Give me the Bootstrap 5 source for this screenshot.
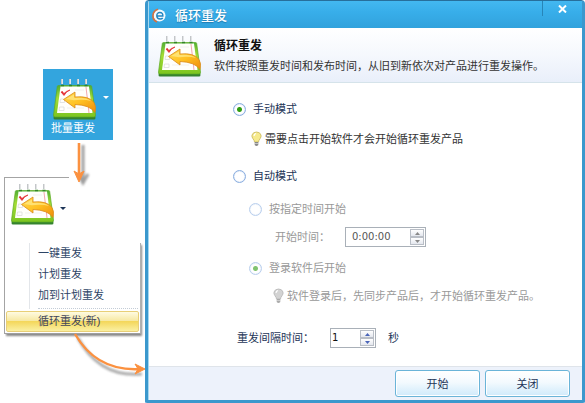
<!DOCTYPE html>
<html lang="zh-CN">
<head>
<meta charset="utf-8">
<meta name="viewport" content="width=device-width, initial-scale=1">
<title>循环重发</title>
<link href="https://cdn.jsdelivr.net/npm/bootstrap@5.3.0/dist/css/bootstrap.min.css" rel="stylesheet">
<style>
  body { font: 11px/16px "Liberation Sans", "Noto Sans CJK SC", sans-serif; color: #333; background: #fff; }
  button, input { font: inherit; }
  .side { width: 145px; padding: 69px 4px 0; }
  .tile { width: 70px; height: 71px; margin-left: 39px; background: #33a5de; color: #fff; padding-top: 9px; }
  .caret { border: 3px solid transparent; border-top-color: currentColor; border-bottom: 0; }
  .tile .caret { margin: -4px 0 0 6px; }
  .tile-icon { padding-left: 10px; }
  .cal { width: 44px; height: 42px; flex: none; }
  .down-arrow { left: 70px; top: 140px; pointer-events: none; }
  .curve-arrow { left: 68px; top: 328px; pointer-events: none; }
  .drop { margin-top: 37px; border-left: 1px solid #a4a4a4; }
  .drop-head { width: 64px; height: 66px; border-top: 1px solid #a4a4a4; padding: 5px 0 0 6px; }
  .drop-head .caret { margin: 7px 0 0 5px; color: #1d3557; }
  .drop-menu { border-right: 1px solid #b0b0b0; border-bottom: 1px solid #a0a0a0; box-shadow: 1px 2px 2px #888; clip-path: inset(0 -3px -5px 0); }
  .drop-menu ul { margin-left: 24px; padding: 0 0 3px 8px; border-left: 1px solid #e3e6ea; }
  .menu-item { display: block; border: 0; background: none; padding: 2px 0; line-height: 17px; color: #2d4465; text-align: left; }
  .split { border-top: 1px dotted #c3ccd6; margin: -1px 2px 2px 33px; }
  .menu-item.chosen { margin: 0 1px 1px; width: calc(100% - 2px); padding: 1px 0 1px 31px; border: 1px solid #e8cf77; border-radius: 2px; color: #41455a; background: linear-gradient(#fffbe2, #f7e9a4 45%, #f4d75b 50%, #faf0a3); }

  .dialog { min-width: 0; border: 3px solid #3b98cd; border-top: 1px solid #276f9c; border-radius: 4px 4px 2px 2px; padding-left: 1px; background: #fff; box-shadow: inset 1px 0 #a5d8f1; }
  .title { height: 27px; background: linear-gradient(#43b8f1, #38aeea 40%, #31a2dc); color: #fff; padding: 2px 0 0 2px; gap: 8px; }
  .title h1 { font-size: 13px; line-height: 20px; font-weight: 500; text-shadow: 0 1px 1px #1f7bb0; }
  .close-btn { width: 40px; height: 15px; margin-top: -2px; border: 0; border-left: 1px solid #2785b8; background: none; color: #fff; }
  .intro { height: 55px; padding: 2px 8px 0 9px; background: linear-gradient(#fff, #f5f8fd 50%, #e9effa); border-bottom: 1px solid #d5e3ea; }
  .intro h2 { font-size: 12px; line-height: 20px; font-weight: 700; color: #111; }
  .intro p { line-height: 20px; color: #333; }
  .form-body { padding: 11px 8px 0 84px; color: #1d3557; }
  .h-22 { height: 22px; } .h-28 { height: 28px; } .h-30 { height: 30px; } .h-34 { height: 34px; } .h-44 { height: 44px; } .h-56 { height: 56px; }
  .lv-tip { padding-left: 18px; } .lv-sub { padding-left: 16px; } .lv-field { padding-left: 42px; } .lv-note { padding-left: 40px; } .lv-gap { padding-left: 4px; }
  .pick { appearance: none; width: 13px; height: 13px; margin: 0 7px 0 0; border: 1px solid #8aaee0; border-radius: 50%; background: #fff; box-shadow: inset 0 0 1px #8aaee0; flex: none; }
  .pick:checked { background: radial-gradient(circle, #2f9d12 0 2px, #fff 3px); }
  .pick:disabled { opacity: .6; }
  .tip-text { color: #333; }
  .muted { color: #999; }
  .bulb { width: 11px; height: 16px; margin-right: 3px; flex: none; }
  .field-label { width: 70px; } .gap-label { width: 93px; }
  .spin { height: 20px; border: 1px solid #a9b0b8; background: #fff; padding: 1px; }
  .spin input { border: 0; padding: 0; background: none; min-width: 0; font-family: "DejaVu Sans", sans-serif; font-size: 10px; line-height: 14px; }
  .spin-time { width: 81px; } .spin-time input { padding-left: 5px; color: #555; }
  .spin-sec { width: 46px; } .spin-sec input { color: #111; }
  .spin button { width: 14px; height: 8px; padding: 0; border: 1px solid #b9bec6; background: linear-gradient(#fff, #e4e7ee); color: #4964b8; line-height: 0; }
  .spin button:disabled { color: #888; }
  .foot { height: 34px; padding: 0 12px 0 8px; gap: 5px; background: #edf2fb; border-top: 1px solid #dfe4ea; }
  .act { width: 85px; height: 27px; padding: 0; border: 1px solid #6ab4d8; border-radius: 3px; background: linear-gradient(#fff, #f3fafe 45%, #cfeafb); box-shadow: inset 0 0 0 1px #fff; color: #1d3557; }
</style>
<script src="https://cdn.jsdelivr.net/npm/bootstrap@5.3.0/dist/js/bootstrap.bundle.min.js"></script>
</head>
<body>
<svg width="0" height="0" class="position-absolute" aria-hidden="true">
  <defs>
    <linearGradient id="gold" x1="0" y1="0" x2="1" y2="1"><stop offset="0" stop-color="#ffdc55"/><stop offset=".5" stop-color="#ffc021"/><stop offset="1" stop-color="#ee8b0b"/></linearGradient>
    <linearGradient id="leaf" x1="0" y1="0" x2="0" y2="1"><stop offset="0" stop-color="#4fae35"/><stop offset=".4" stop-color="#a4dc35"/><stop offset="1" stop-color="#7cc520"/></linearGradient>
    <filter id="soft" x="-50%" y="-50%" width="200%" height="200%"><feGaussianBlur stdDeviation="1.3"/></filter>
    <symbol id="calendar" viewBox="0 0 44 42">
      <path d="M1 37h41l.5 3q0 1.500-1.500 1.500H2Q.5 41.500.5 40z" fill="#35832e"/>
      <path d="M5.500 7.500h32q1 0 1.200 1L42.500 37q.2 2-1.500 2H2Q.2 39 .5 37L4.300 8.500q.2-1 1.200-1z" fill="url(#leaf)" stroke="#5cab22" stroke-width=".7"/>
      <path d="M7.500 8.500h28.500L39.500 35H4z" fill="#fffffb"/>
      <path d="M33 9l3 26" stroke="#f3a8ad" fill="none"/>
      <path d="M7.500 21h4v3.500h-4.500zM6.500 29h4.500v3.500H6z" fill="none" stroke="#ddd" stroke-width=".8"/>
      <path d="M14 30h17M22 12h9" stroke="#ebebeb" stroke-width=".7"/>
      <path d="M9 1v5M17 1v5M25 1v5M33 1v5" stroke="#c3c6c9" stroke-width="2"/>
      <path d="M9.500 1v5M17.500 1v5M25.500 1v5M33.500 1v5" stroke="#f1f1f1" stroke-width=".7"/>
      <path d="M8 7.500h3M16 7.500h3M24 7.500h3M31.500 7.500h3" stroke="#348329" stroke-width="1.500"/>
      <path d="M8 14l3 3.500q2-4 6-5.500-4 1-6 3.500-1-1-1.500-2z" fill="#e3292e" stroke="#e3292e" stroke-width=".7"/>
      <path d="M10.500 21.500L22 14v5Q36 17.500 41 24.500q2.500 4 1 10Q37 27 22 26.500V30z" fill="url(#gold)" stroke="#d98a18" stroke-width=".8" stroke-linejoin="round"/>
      <path d="M13 21l8-4.500v3.500q12-1 17 3-7-2-17-.8z" fill="#ffeb8c" opacity=".7"/>
    </symbol>
    <symbol id="lamp" viewBox="0 0 11 16">
      <path d="M3.500 11Q3.400 9.500 2 7.800.5 5.800 1 4q1-3 4.500-3T10 4q.5 1.800-1 3.800Q7.600 9.500 7.500 11z" fill="var(--glass)" stroke="var(--rim)" stroke-width=".8"/>
      <path d="M3 5q.2-2 2-2.500" stroke="#fff" stroke-width="1.200" fill="none"/>
      <path d="M3.700 11h3.600v3q-1.800 2-3.600 0z" fill="var(--base)"/><path d="M4 12.500h3" stroke="#ddd" stroke-width=".7"/>
    </symbol>
  </defs>
</svg>

<div class="d-flex position-relative">
  <aside class="side flex-shrink-0">
    <div class="tile">
      <div class="d-flex align-items-center tile-icon"><svg class="cal" aria-hidden="true"><use href="#calendar"/></svg><i class="caret"></i></div>
      <div class="ps-2">批量重发</div>
    </div>
    <div class="drop">
      <div class="drop-head d-flex">
        <svg class="cal" aria-hidden="true"><use href="#calendar"/></svg><i class="caret mt-4 pt-1"></i>
      </div>
      <div class="drop-menu">
        <ul class="list-unstyled mb-0">
          <li><button class="menu-item">一键重发</button></li>
          <li><button class="menu-item">计划重发</button></li>
          <li><button class="menu-item">加到计划重发</button></li>
        </ul>
        <div class="split"></div>
        <button class="menu-item chosen">循环重发(新)</button>
      </div>
    </div>
  </aside>

  <main class="dialog flex-grow-1 d-flex flex-column">
    <header class="title d-flex align-items-center">
      <svg width="16" height="16" viewBox="0 0 16 16" aria-hidden="true">
        <circle cx="8.500" cy="7.500" r="6" fill="#f3f9fd"/>
        <path d="M7 1.200A6.800 6.800 0 0 0 6 14" fill="none" stroke="#d9703d" stroke-width="1.600"/>
        <path d="M6 8h5.800Q12 4.500 8.900 4.500T5.800 8q.2 3 3.300 3 1.700 0 2.700-1" fill="none" stroke="#2487c2" stroke-width="1.500"/>
      </svg>
      <h1 class="mb-0">循环重发</h1>
      <button class="close-btn ms-auto align-self-start p-0 d-flex align-items-center justify-content-center" aria-label="关闭窗口">
        <svg width="9" height="8" viewBox="0 0 9 8"><path d="M1 .5l7 7M8 .5l-7 7" stroke="#fff" stroke-width="2"/></svg>
      </button>
    </header>
    <section class="intro d-flex align-items-center">
      <svg class="cal" aria-hidden="true"><use href="#calendar"/></svg>
      <div class="ms-2 ps-1"><h2 class="mb-0">循环重发</h2><p class="mb-0">软件按照重发时间和发布时间，从旧到新依次对产品进行重发操作。</p></div>
    </section>
    <form class="form-body flex-grow-1">
      <div class="h-30 d-flex align-items-center"><input class="pick" type="radio" name="mode" id="manual" checked><label for="manual">手动模式</label></div>
      <div class="h-30 d-flex align-items-center lv-tip tip-text"><svg class="bulb" style="--glass:#f6ea8e;--rim:#c8b65a;--base:#888" aria-hidden="true"><use href="#lamp"/></svg>需要点击开始软件才会开始循环重发产品</div>
      <div class="h-44 d-flex align-items-center"><input class="pick" type="radio" name="mode" id="auto"><label for="auto">自动模式</label></div>
      <div class="h-22 d-flex align-items-center lv-sub muted"><input class="pick" type="radio" name="when" id="fixed" disabled><label for="fixed">按指定时间开始</label></div>
      <div class="h-34 d-flex align-items-center lv-field muted">
        <label class="field-label" for="start">开始时间：</label>
        <div class="spin spin-time d-flex"><input class="flex-grow-1 w-100" id="start" type="text" value="0:00:00" disabled>
          <div class="d-flex flex-column"><button type="button" disabled aria-label="增加时间"><svg width="5" height="3"><path d="M0 3L2.500 0 5 3z" fill="currentColor"/></svg></button><button type="button" disabled aria-label="减少时间"><svg width="5" height="3"><path d="M0 0h5L2.500 3z" fill="currentColor"/></svg></button></div></div>
      </div>
      <div class="h-28 d-flex align-items-center lv-sub muted"><input class="pick" type="radio" name="when" id="login" checked disabled><label for="login">登录软件后开始</label></div>
      <div class="h-28 d-flex align-items-center lv-note muted"><svg class="bulb" style="--glass:#d3d3d3;--rim:#b5b5b5;--base:#aaa" aria-hidden="true"><use href="#lamp"/></svg>软件登录后，先同步产品后，才开始循环重发产品。</div>
      <div class="h-56 d-flex align-items-center lv-gap">
        <label class="gap-label" for="seconds">重发间隔时间：</label>
        <div class="spin spin-sec d-flex"><input class="flex-grow-1 w-100" id="seconds" type="text" value="1">
          <div class="d-flex flex-column"><button type="button" aria-label="增加秒数"><svg width="5" height="3"><path d="M0 3L2.500 0 5 3z" fill="currentColor"/></svg></button><button type="button" aria-label="减少秒数"><svg width="5" height="3"><path d="M0 0h5L2.500 3z" fill="currentColor"/></svg></button></div></div>
        <span class="ms-2 ps-1">秒</span>
      </div>
    </form>
    <footer class="foot d-flex align-items-center justify-content-end">
      <button class="act">开始</button><button class="act">关闭</button>
    </footer>
  </main>

  <svg class="down-arrow position-absolute" width="24" height="48" viewBox="0 0 24 48" aria-hidden="true">
    <path d="M13 5v37M8 34l5 9 5-9" fill="none" stroke="#777" stroke-width="3" filter="url(#soft)" opacity=".7"/>
    <path d="M9 3v34" stroke="#fb9140" stroke-width="2.600"/><path d="M4 31l5 3 5-3-5 11z" fill="#fb9140" stroke="#fb9140"/>
  </svg>
  <svg class="curve-arrow position-absolute" width="84" height="56" viewBox="0 0 84 56" aria-hidden="true">
    <path d="M10 10Q32 50 74 46" fill="none" stroke="#777" stroke-width="3" filter="url(#soft)" opacity=".6"/>
    <path d="M7 6Q29 44 73 41" fill="none" stroke="#fb9140" stroke-width="2.400"/><path d="M67 36l10 5-10 5 3-5z" fill="#fb9140" stroke="#fb9140"/>
  </svg>
</div>
</body>
</html>
